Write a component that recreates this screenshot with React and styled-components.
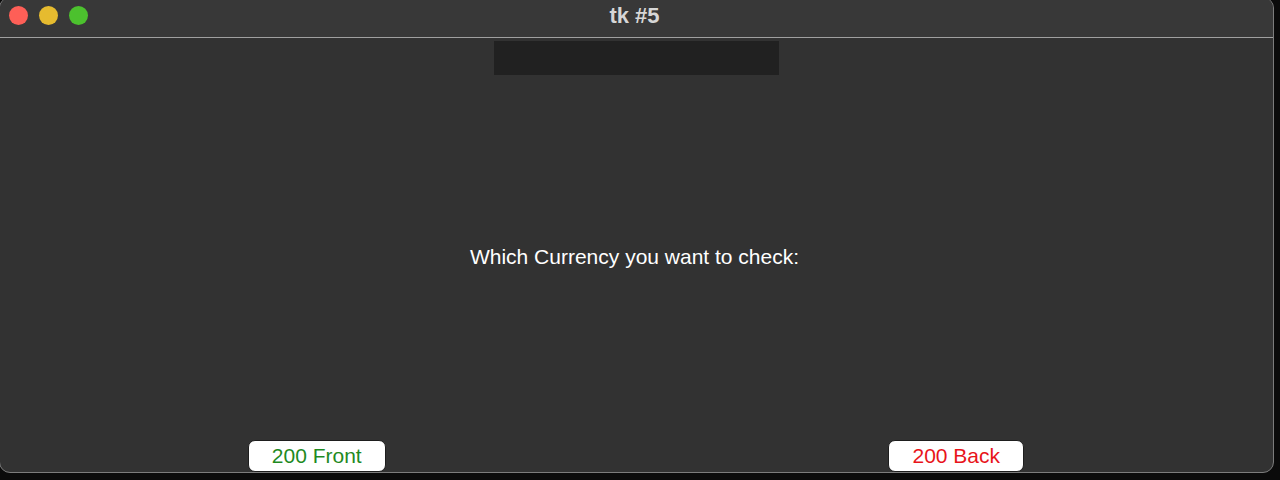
import React from 'react'
import styled, { createGlobalStyle } from 'styled-components'

const GlobalStyle = createGlobalStyle`
  html, body {
    margin: 0;
    padding: 0;
    background: #0b0b0b;
    width: 1280px;
    height: 480px;
    overflow: hidden;
  }
`

const Window = styled.div`
  box-sizing: border-box;
  width: 1275px;
  height: 476px;
  margin-top: -3px;
  margin-left: -1px;
  background: #323232;
  border: 1px solid #7c7c7c;
  border-radius: 11px;
  overflow: hidden;
  display: flex;
  flex-direction: column;
  font-family: "Liberation Sans", Arial, sans-serif;
`

const TitleBar = styled.div`
  position: relative;
  height: 39px;
  flex-shrink: 0;
  background: #383838;
  border-bottom: 1px solid #a0a0a0;
  display: flex;
  align-items: center;
  justify-content: center;
`

const Lights = styled.div`
  position: absolute;
  left: 9px;
  top: 8px;
  display: flex;
  gap: 11px;
`

const Light = styled.span`
  width: 19px;
  height: 19px;
  border-radius: 50%;
  background: ${p => p.color};
`

const Title = styled.div`
  color: #d6d6d6;
  font-weight: bold;
  font-size: 22px;
  margin-top: -4px;
  margin-left: -4px;
`

const Content = styled.div`
  flex: 1;
  display: flex;
  flex-direction: column;
  align-items: center;
  padding-top: 3px;
`

const EntryBox = styled.div`
  width: 285px;
  height: 34px;
  background: #212121;
  margin-left: -1px;
`

const Middle = styled.div`
  flex: 1;
  display: flex;
  align-items: center;
  justify-content: center;
`

const Label = styled.div`
  color: #ffffff;
  font-size: 21px;
  margin-left: -4px;
  margin-top: -2px;
`

const ButtonRow = styled.div`
  width: 100%;
  display: grid;
  grid-template-columns: 1fr 1fr;
`

const Cell = styled.div`
  display: flex;
  justify-content: center;
`

const Button = styled.button`
  box-sizing: border-box;
  width: ${p => p.w}px;
  height: 32px;
  background: #ffffff;
  border: 1px solid #1e1e1e;
  border-radius: 7px;
  color: ${p => p.color};
  font-family: "Liberation Sans", Arial, sans-serif;
  font-size: 21px;
  padding: 0;
  margin-left: ${p => p.shift}px;
`

export default function App() {
  return (
    <>
      <GlobalStyle />
      <Window>
        <TitleBar>
          <Lights>
            <Light color="#fe5f57" />
            <Light color="#e6bb2f" />
            <Light color="#4cc12e" />
          </Lights>
          <Title>tk #5</Title>
        </TitleBar>
        <Content>
          <EntryBox />
          <Middle>
            <Label>Which Currency you want to check:</Label>
          </Middle>
          <ButtonRow>
            <Cell>
              <Button w={138} color="#1f8a1f" shift={-3}>200 Front</Button>
            </Cell>
            <Cell>
              <Button w={136} color="#e8141a" shift={3}>200 Back</Button>
            </Cell>
          </ButtonRow>
        </Content>
      </Window>
    </>
  )
}
